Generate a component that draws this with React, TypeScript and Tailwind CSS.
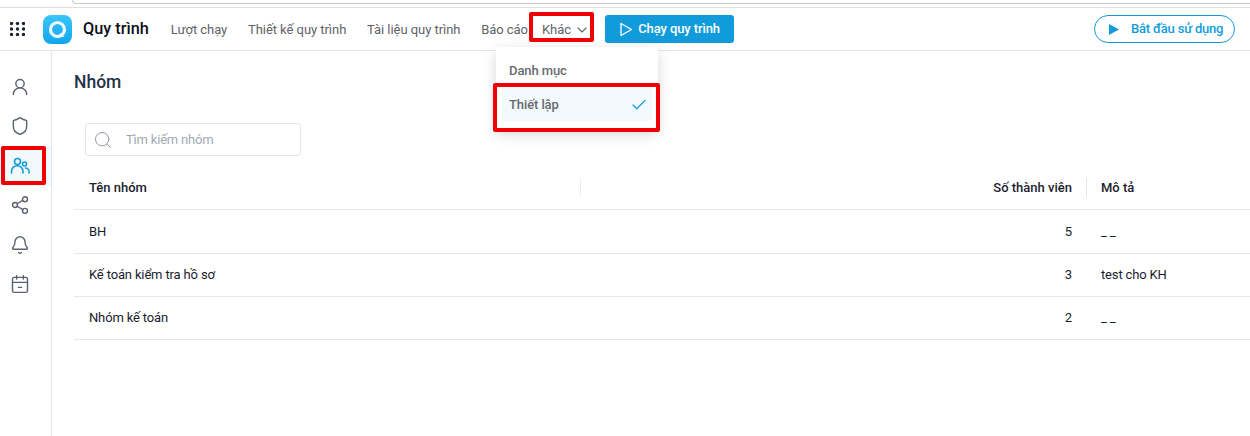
import React from "react";
import { ChevronDown, Check, Search, UserRound, Shield, Share2, Bell, CalendarMinus2 } from "lucide-react";

const rows = [
  { name: "BH", count: 5, desc: "_ _" },
  { name: "Kế toán kiểm tra hồ sơ", count: 3, desc: "test cho KH" },
  { name: "Nhóm kế toán", count: 2, desc: "_ _" },
];

const navItems = ["Lượt chạy", "Thiết kế quy trình", "Tài liệu quy trình", "Báo cáo"];

const AppsGrid = () => (
  <svg width="15" height="14" viewBox="0 0 15 14" fill="#1f2430">
    {[1.5, 7.5, 13.5].map((x) =>
      [1.5, 7, 12.5].map((y) => <circle key={`${x}-${y}`} cx={x} cy={y} r="1.7" />)
    )}
  </svg>
);

const Logo = () => (
  <div className="w-[29px] h-[29px] rounded-[8px] bg-gradient-to-b from-[#38c6fb] to-[#0ea5ec] flex items-center justify-center">
    <svg width="19" height="19" viewBox="0 0 19 19" fill="none">
      <circle cx="9.5" cy="9.5" r="7" stroke="#eefaff" strokeWidth="3.2" />
      <path d="M12 13 L16.5 17 L11 16.5 Z" fill="#eefaff" />
    </svg>
  </div>
);

const GroupIcon = () => (
  <svg width="20" height="20" viewBox="0 0 20 20" fill="none" stroke="currentColor" strokeWidth="1.6" strokeLinecap="round">
    <circle cx="7.5" cy="5.5" r="3" />
    <path d="M1.5 17 v-1.5 a5.5 5.5 0 0 1 11.5 0 V17" />
    <circle cx="14.5" cy="8" r="2" />
    <path d="M15.5 12 a3.5 3.5 0 0 1 3.5 3.5 V17" />
  </svg>
);

export default function App() {
  return (
    <div className="w-[1250px] h-[436px] overflow-hidden bg-white relative font-['Roboto',sans-serif]">
      {/* browser strip left over on top of the capture */}
      <div className="h-[8px] bg-white border-b border-[#dedede]">
        <div className="ml-[72px] h-[4px] border-b border-l rounded-bl-[8px] border-[#c8c8c8]"></div>
      </div>

      <header className="h-[43px] border-b border-[#e6e6e6] flex items-center pl-[10px] pr-[15px]">
        <AppsGrid />
        <div className="ml-[18px]">
          <Logo />
        </div>
        <span className="ml-[11px] pt-px text-[16.3px] font-medium text-[#0b0f19]">Quy trình</span>
        <nav className="flex items-center pt-px ml-[22px] gap-[20.8px] text-[13px] tracking-[-0.05px] text-[#5f6368]">
          {navItems.map((item) => (
            <span key={item}>{item}</span>
          ))}
        </nav>
        <div className="flex items-center pt-px ml-[14px] text-[13px] text-[#5f6368]">
          Khác
          <ChevronDown size={16} strokeWidth={1.6} className="ml-[3px]" />
        </div>
        <button className="ml-[15px] h-[28px] w-[129px] rounded-[3px] bg-[#129bdb] text-white text-[13px] tracking-[-0.1px] font-medium flex items-center pl-[14px] gap-[5px]">
          <svg width="14" height="15" viewBox="0 0 14 15" fill="none" stroke="currentColor" strokeWidth="1.3" strokeLinejoin="round">
            <path d="M2 1.5 L12.5 7.5 L2 13.5 Z" />
          </svg>
          Chạy quy trình
        </button>
        <button className="ml-auto h-[28px] w-[141px] rounded-full border border-[#129bdb] text-[#129bdb] text-[13px] tracking-[-0.2px] font-medium flex items-center pl-[14px] gap-[12px]">
          <svg width="10" height="11" viewBox="0 0 10 11" fill="#129bdb">
            <path d="M0 0 L10 5.5 L0 11 Z" />
          </svg>
          Bắt đầu sử dụng
        </button>
      </header>

      <div className="flex h-[385px]">
        <aside className="w-[52px] border-r border-[#e6e6e6] pt-[16px] flex flex-col text-[#5b6270]">
          <div className="h-[39.5px] flex items-center justify-center pr-[11px]"><UserRound size={20} strokeWidth={1.7} /></div>
          <div className="h-[39.5px] flex items-center justify-center pr-[11px]"><Shield size={20} strokeWidth={1.7} /></div>
          <div className="h-[39.5px] flex items-center justify-center pr-[11px] bg-[#f1f9fd] text-[#129bdb]"><GroupIcon /></div>
          <div className="h-[39.5px] flex items-center justify-center pr-[11px]"><Share2 size={20} strokeWidth={1.7} /></div>
          <div className="h-[39.5px] flex items-center justify-center pr-[11px]"><Bell size={20} strokeWidth={1.7} /></div>
          <div className="h-[39.5px] flex items-center justify-center pr-[11px]"><CalendarMinus2 size={20} strokeWidth={1.7} /></div>
        </aside>

        <main className="flex-1 pl-[22px] pt-[20px]">
          <h1 className="text-[17.5px] leading-[22px] font-medium text-[#243447]">Nhóm</h1>

          <div className="mt-[30px] ml-[11px] w-[216px] h-[33px] border border-[#e4e6ea] rounded-[3px] flex items-center pl-[7px]">
            <Search size={20} strokeWidth={1.2} className="text-[#8f97a3]" />
            <span className="ml-[13px] text-[13px] tracking-[-0.2px] text-[#a3a9b3]">Tìm kiếm nhóm</span>
          </div>

          <div className="mt-[10px]">
            <div className="h-[44px] border-b border-[#e4e6ea] flex items-center text-[13px] font-medium text-[#1a1d2e]">
              <div className="w-[507px] pl-[15px] h-[19px] border-r border-[#eceef0] flex items-center">Tên nhóm</div>
              <div className="w-[505px] pr-[14px] text-right">Số thành viên</div>
              <div className="pl-[14px] h-[19px] border-l border-[#e4e6ea] flex items-center">Mô tả</div>
            </div>
            <div>
              {rows.map((r) => (
                <div key={r.name} className="h-[43px] first:h-[44px] border-b border-[#e4e6ea] flex items-center text-[13px] tracking-[-0.15px] text-[#1a1d2e]">
                  <div className="w-[507px] pl-[15px]">{r.name}</div>
                  <div className="w-[505px] pr-[14px] text-right">{r.count}</div>
                  <div className="pl-[15px]">{r.desc}</div>
                </div>
              ))}
            </div>
          </div>
        </main>
      </div>

      {/* dropdown menu */}
      <div className="absolute left-[496px] top-[47px] w-[162px] h-[83px] bg-white rounded-[4px] shadow-[0_4px_14px_rgba(0,0,0,0.16)] pt-[14px] px-[6px] text-[13px] tracking-[-0.1px] font-medium text-[#666a70]">
        <div className="h-[20px] pl-[7px] flex items-center">Danh mục</div>
        <div className="mt-[7px] h-[33px] rounded-[3px] bg-[#f2fafd] pl-[7px] pr-[4px] flex items-center justify-between">
          Thiết lập
          <Check size={18} strokeWidth={1.6} className="text-[#129bdb]" />
        </div>
      </div>

      {/* red annotation boxes */}
      <div className="absolute left-[529px] top-[12px] w-[65px] h-[30px] border-[4px] border-[#f00000] rounded-[2px]"></div>
      <div className="absolute left-[493px] top-[83px] w-[167px] h-[49px] border-[4px] border-[#f00000] rounded-[2px]"></div>
      <div className="absolute left-[1px] top-[146px] w-[45px] h-[39px] border-[4px] border-[#f00000] rounded-[2px]"></div>
    </div>
  );
}
